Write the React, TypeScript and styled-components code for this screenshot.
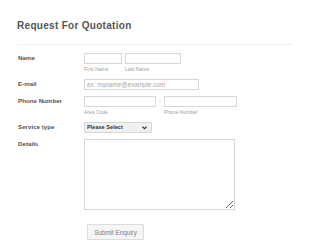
import React, { FC } from 'react'
import styled, { createGlobalStyle } from 'styled-components'

const GlobalStyle = createGlobalStyle`
  body {
    margin: 0;
    background: #fff;
    font-family: "Liberation Sans", Arial, sans-serif;
  }
`

const Page = styled.div`
  width: 310px;
  height: 250px;
  padding: 0 17px;
  box-sizing: border-box;
  overflow: hidden;
`

const Header = styled.div`
  padding-top: 19px;
  padding-bottom: 12px;
  border-bottom: 1px solid #f0f0f0;
  width: 276px;
`

const Title = styled.h1`
  margin: 0;
  font-size: 10px;
  letter-spacing: 0.3px;
  line-height: 13px;
  font-weight: 700;
  color: #555;
`

const Form = styled.form`
  display: flex;
  flex-direction: column;
  padding-top: 8px;
`

const Row = styled.div<{ $gap?: number }>`
  display: grid;
  grid-template-columns: 67px 1fr;
  align-items: start;
  margin-bottom: ${(p) => p.$gap ?? 6}px;
`

const Label = styled.label`
  font-size: 6.2px;
  font-weight: 700;
  color: #555;
  line-height: 8px;
  padding-top: 1px;
  padding-left: 1px;
`

const Fields = styled.div`
  display: flex;
  align-items: flex-start;
`

const Field = styled.div`
  display: flex;
  flex-direction: column;
`

const Input = styled.input<{ $w: number }>`
  display: block;
  box-sizing: border-box;
  width: ${(p) => p.$w}px;
  height: 11px;
  margin: 0;
  padding: 0 2px;
  border: 1px solid #d6d6d6;
  border-radius: 0;
  font-family: inherit;
  font-size: 6.3px;
  color: #555;
  outline: none;
  &::placeholder {
    color: #a8a8a8;
  }
`

const SubLabel = styled.span`
  margin-top: 2px;
  font-size: 5px;
  line-height: 7px;
  color: #a0a0a0;
`

const Dash = styled.span`
  width: 8px;
  height: 11px;
  line-height: 11px;
  text-align: center;
  font-size: 6px;
  color: #aaa;
`

const SelectBox = styled.div`
  position: relative;
  width: 68px;
  height: 11px;
`

const Select = styled.select`
  display: block;
  appearance: none;
  box-sizing: border-box;
  width: 100%;
  height: 11px;
  margin: 0;
  padding: 0 2px;
  border: 1px solid #d6d6d6;
  border-radius: 1px;
  background: #f0f0f0;
  font-family: inherit;
  font-size: 5.6px;
  line-height: 9px;
  font-weight: 700;
  color: #333;
  outline: none;
`

const Chevron = styled.svg`
  position: absolute;
  right: 5px;
  top: 4px;
  pointer-events: none;
`

const TextArea = styled.textarea`
  display: block;
  box-sizing: border-box;
  width: 151px;
  height: 71px;
  margin: 0;
  border: 1px solid #d6d6d6;
  border-radius: 0;
  outline: none;
`

const ButtonRow = styled.div`
  padding-left: 70px;
`

const Button = styled.button`
  display: block;
  box-sizing: border-box;
  width: 57px;
  height: 16px;
  margin: 0;
  padding: 0;
  border: 1px solid #dcdcdc;
  border-radius: 1px;
  background: #f6f6f6;
  font-family: inherit;
  font-size: 6.3px;
  color: #7a7a7a;
`

export const App: FC = () => {
  return (
    <Page>
      <GlobalStyle />
      <Header>
        <Title>Request For Quotation</Title>
      </Header>
      <Form>
        <Row>
          <Label>Name</Label>
          <Fields>
            <Field>
              <Input $w={38} />
              <SubLabel>First Name</SubLabel>
            </Field>
            <Field style={{ marginLeft: 3 }}>
              <Input $w={56} />
              <SubLabel>Last Name</SubLabel>
            </Field>
          </Fields>
        </Row>
        <Row>
          <Label>E-mail</Label>
          <Fields>
            <Input $w={115} placeholder="ex: myname@example.com" />
          </Fields>
        </Row>
        <Row>
          <Label>Phone Number</Label>
          <Fields>
            <Field>
              <Input $w={72} />
              <SubLabel>Area Code</SubLabel>
            </Field>
            <Dash>-</Dash>
            <Field>
              <Input $w={73} />
              <SubLabel>Phone Number</SubLabel>
            </Field>
          </Fields>
        </Row>
        <Row>
          <Label>Service type</Label>
          <SelectBox>
            <Select defaultValue="">
              <option value="">Please Select</option>
            </Select>
            <Chevron width="5" height="4" viewBox="0 0 10 7">
              <path d="M1 1 L5 5 L9 1" fill="none" stroke="#333" strokeWidth="2.2" />
            </Chevron>
          </SelectBox>
        </Row>
        <Row $gap={14}>
          <Label>Details</Label>
          <TextArea />
        </Row>
        <ButtonRow>
          <Button type="button">Submit Enquiry</Button>
        </ButtonRow>
      </Form>
    </Page>
  )
}

export default App
